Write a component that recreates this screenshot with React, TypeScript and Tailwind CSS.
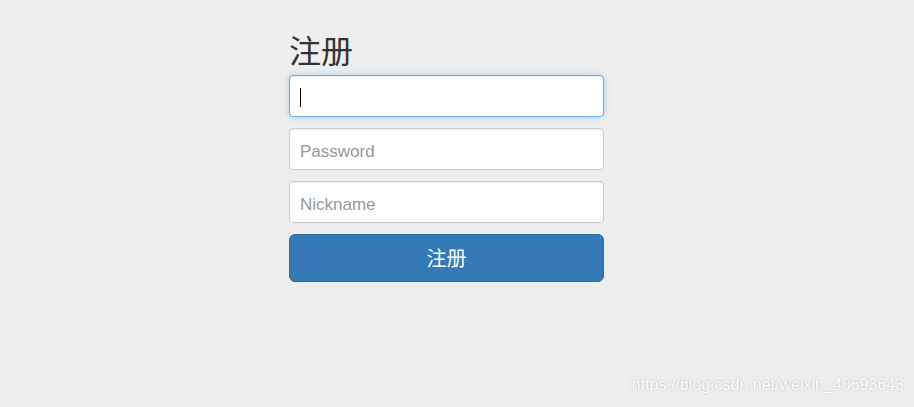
export default function App() {
  return (
    <div className="relative min-h-[407px] w-full bg-[#eeeeee] font-['Liberation_Sans','Noto_Sans_CJK_SC',sans-serif]">
      <div className="ml-[289px] w-[315px] pt-[32px]">
        <h2 className="mb-[9px] text-[32px] leading-[34px] text-[#333333] font-['Noto_Sans_CJK_SC',sans-serif]">注册</h2>
        <div className="flex flex-col gap-[11px]">
          <div className="relative">
            <input
              type="text"
              className="block h-[42px] w-full rounded-[4px] border border-[#66afe9] bg-white px-[10px] text-[17px] text-[#555] outline-none shadow-[inset_0_1px_1px_rgba(0,0,0,0.075),0_0_6px_rgba(102,175,233,0.5)]"
            />
            <span className="absolute left-[11px] top-[13px] h-[19px] w-px bg-black" />
          </div>
          <input
            type="password"
            placeholder="Password"
            className="block h-[42px] w-full rounded-[4px] border border-[#cccccc] bg-white px-[10px] pt-[6px] pb-0 text-[17px] text-[#555] outline-none placeholder:text-[#999999] shadow-[inset_0_1px_1px_rgba(0,0,0,0.075)]"
          />
          <input
            type="text"
            placeholder="Nickname"
            className="block h-[42px] w-full rounded-[4px] border border-[#cccccc] bg-white px-[10px] pt-[6px] pb-0 text-[17px] text-[#555] outline-none placeholder:text-[#999999] shadow-[inset_0_1px_1px_rgba(0,0,0,0.075)]"
          />
          <button className="h-[48px] w-full rounded-[6px] border border-[#2e6da4] bg-[#337ab7] text-[20px] text-white font-['Noto_Sans_CJK_SC',sans-serif]">
            注册
          </button>
        </div>
      </div>
      <div className="absolute bottom-[10px] right-[10px] text-[16px] text-white [text-shadow:0_0_2px_rgba(0,0,0,0.25)]">
        https://blog.csdn.net/weixin_40693643
      </div>
    </div>
  );
}
